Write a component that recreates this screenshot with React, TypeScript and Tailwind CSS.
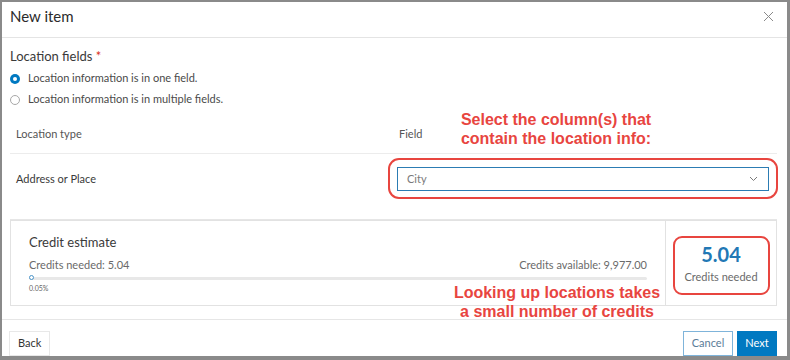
import React from "react";

const ui = { fontFamily: "Lato, 'Open Sans', 'Noto Sans', sans-serif" };
const ann = { fontFamily: "'Liberation Sans', Arial, sans-serif" };

export default function App() {
  return (
    <div className="relative w-[790px] h-[360px] bg-[#8a8a8a] pt-[2px] pl-[2px] overflow-hidden" style={ui}>
      <div className="w-[785px] h-[354px] bg-white flex flex-col">
        {/* Header */}
        <div className="h-[36px] shrink-0 border-b border-[#e4e4e4] flex items-start justify-between pl-[8px] pr-[12px] pt-[4px]">
          <span className="text-[15px] leading-[20px] text-[#2b2b2b]">New item</span>
          <svg width="11" height="11" viewBox="0 0 11 11" className="mr-[1px] mt-[5px]">
            <path d="M1 1 L10 10 M10 1 L1 10" stroke="#8a8a8a" strokeWidth="1" fill="none" />
          </svg>
        </div>

        {/* Body */}
        <div className="flex-1 pl-[8px] pr-[10px] flex flex-col">
          <div className="pt-[9px] text-[13px] leading-[18px] text-[#3a3a3a]">
            Location fields <span className="text-[#d83020]">*</span>
          </div>
          <div className="mt-[3px] flex flex-col text-[11px] text-[#4a4a4a]">
            <label className="h-[21px] flex items-center gap-[8px]">
              <span className="w-[10px] h-[10px] rounded-full bg-[#0079c1] flex items-center justify-center">
                <span className="w-[4px] h-[4px] rounded-full bg-white" />
              </span>
              <span>Location information is in one field.</span>
            </label>
            <label className="h-[21px] flex items-center gap-[8px]">
              <span className="w-[10px] h-[10px] rounded-full border border-[#a8a8a8] bg-white" />
              <span>Location information is in multiple fields.</span>
            </label>
          </div>

          {/* Table header */}
          <div className="mt-[5px] h-[39px] border-b border-[#ececec] flex items-center text-[11px] text-[#555]">
            <div className="w-[387px] pl-[6px]">Location type</div>
            <div className="pl-[2px]">Field</div>
          </div>

          {/* Row */}
          <div className="relative h-[66px] border-b border-[#e6e6e6] flex items-start pt-[13px] text-[11px] text-[#3a3a3a]">
            <div className="w-[387px] pl-[6px] leading-[24px]">Address or Place</div>
            <div className="w-[372px] h-[24px] border border-[#2c7cb3] flex items-center justify-between pl-[9px] pr-[10px]">
              <span className="text-[#7a7a7a]">City</span>
              <svg width="9" height="6" viewBox="0 0 9 6">
                <path d="M1 1 L4.5 4.5 L8 1" stroke="#7a7a7a" strokeWidth="1" fill="none" />
              </svg>
            </div>
            <div className="absolute left-[378px] top-[4px] w-[390px] h-[41px] border-[2.5px] border-[#e8453f] rounded-[11px]" />
          </div>

          {/* Credit estimate */}
          <div className="h-[86px] border border-[#e2e2e2] flex">
            <div className="flex-1 pl-[18px] pr-[18px] pt-[12px] flex flex-col">
              <div className="text-[13px] leading-[18px] text-[#3a3a3a]">Credit estimate</div>
              <div className="mt-[6px] flex justify-between text-[11px] leading-[16px] text-[#6a6a6a]">
                <span>Credits needed: 5.04</span>
                <span>Credits available: 9,977.00</span>
              </div>
              <div className="relative mt-[4px] h-[3px] bg-[#e8e8e8] rounded-full">
                <span className="absolute left-[0px] top-[-2px] w-[5px] h-[5px] rounded-full border border-[#4a94c8] bg-white" />
              </div>
              <div className="mt-[3px] text-[7px] leading-[10px] text-[#666]">0.05%</div>
            </div>
            <div className="relative w-[111px] border-l border-[#e2e2e2] flex flex-col items-center justify-center">
              <div className="text-[20px] leading-[24px] font-bold text-[#2278b5]">5.04</div>
              <div className="mt-[3px] text-[11px] leading-[16px] text-[#6a6a6a]">Credits needed</div>
              <div className="absolute left-[7px] right-[6px] top-[15px] bottom-[10px] border-[2.5px] border-[#e8453f] rounded-[9px]" />
            </div>
          </div>
        </div>

        {/* Footer */}
        <div className="h-[37px] shrink-0 border-t border-[#e6e6e6] flex items-start justify-between pl-[7px] pr-[10px] pt-[11px] text-[11px]">
          <button className="h-[25px] px-[8px] border border-[#e8e8e8] bg-white text-[#333]">Back</button>
          <div className="flex gap-[4px]">
            <button className="h-[25px] w-[50px] border border-[#7fb4da] bg-white text-[#5b7c98]">Cancel</button>
            <button className="h-[25px] w-[40px] bg-[#0079c1] text-white">Next</button>
          </div>
        </div>
      </div>

      {/* Annotations */}
      <div
        className="absolute left-[416px] top-[110px] w-[280px] text-center text-[16px] leading-[19px] font-bold text-[#e8453f]"
        style={ann}
      >
        Select the column(s) that
        <br />
        contain the location info:
      </div>
      <div
        className="absolute left-[417px] top-[283px] w-[280px] text-center text-[16px] leading-[19px] font-bold text-[#e8453f]"
        style={ann}
      >
        Looking up locations takes
        <br />
        a small number of credits
      </div>
    </div>
  );
}
